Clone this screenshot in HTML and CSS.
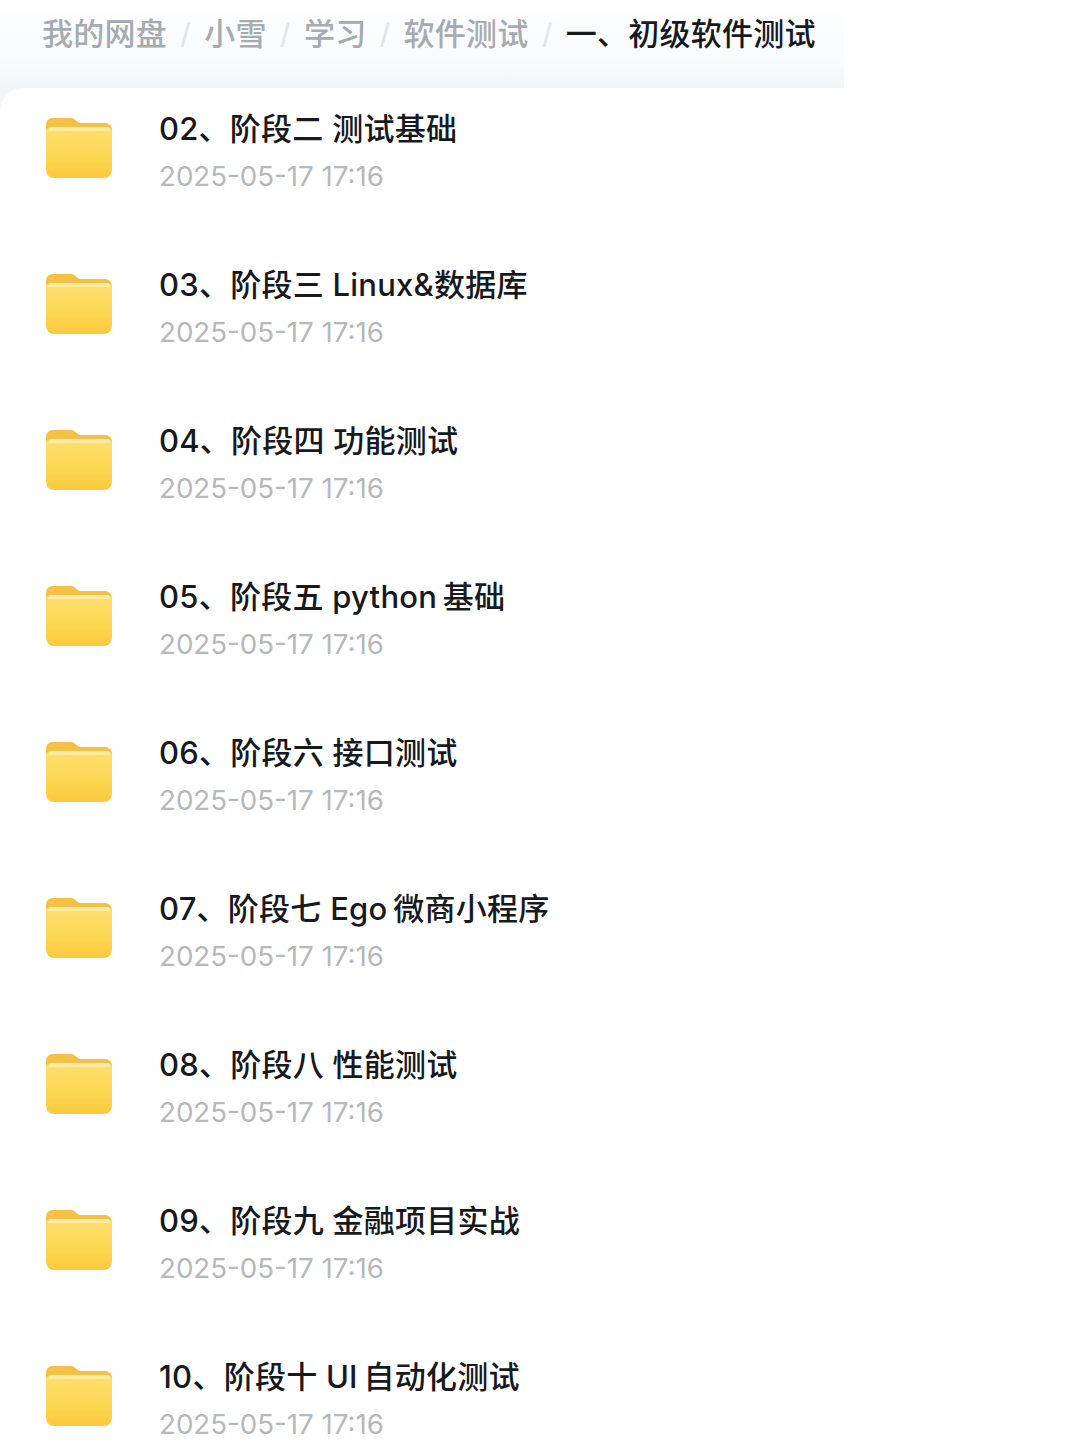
FILE: index.html
```html
<!DOCTYPE html>
<html lang="zh-CN">
<head>
    <meta charset="UTF-8">
    <title>我的网盘</title>
    <link rel="stylesheet" href="styles.css">
</head>
<body>

    <svg class="defs" width="0" height="0">
        <defs>
            <linearGradient id="folder-front" x1="0" y1="0" x2="0" y2="1">
                <stop offset="0" stop-color="#fde070"/>
                <stop offset="0.55" stop-color="#fdd752"/>
                <stop offset="1" stop-color="#fbc93e"/>
            </linearGradient>
            <symbol id="folder" viewBox="0 0 66 60">
                <path d="M0 7C0 3 3 0 7 0H25C29 0 31 5 35 5H59C63 5 66 8 66 12V30H0Z" fill="#f4c144"/>
                <path d="M0 13C0 11 2 9 4 9H62C64 9 66 11 66 13V51C66 56 63 60 58 60H8C3 60 0 56 0 51Z" fill="url(#folder-front)"/>
                <path d="M6 9H60C62 9 63 10 64 13H2C3 10 4 9 6 9Z" fill="#feeaa2"/>
            </symbol>
        </defs>
    </svg>

    <div class="crumbs">
        <span class="crumb">我的网盘</span><span class="sep">/</span>
        <span class="crumb">小雪</span><span class="sep">/</span>
        <span class="crumb">学习</span><span class="sep">/</span>
        <span class="crumb">软件测试</span><span class="sep">/</span>
        <span class="crumb current">一、初级软件测试</span>
    </div>

    <div class="list">
        <div class="row">
            <svg class="icon"><use href="#folder"/></svg>
            <div class="info"><div class="name">02、阶段二 测试基础</div><div class="date">2025-05-17 17:16</div></div>
        </div>
        <div class="row">
            <svg class="icon"><use href="#folder"/></svg>
            <div class="info"><div class="name">03、阶段三 Linux&amp;数据库</div><div class="date">2025-05-17 17:16</div></div>
        </div>
        <div class="row">
            <svg class="icon"><use href="#folder"/></svg>
            <div class="info"><div class="name">04、阶段四 功能测试</div><div class="date">2025-05-17 17:16</div></div>
        </div>
        <div class="row">
            <svg class="icon"><use href="#folder"/></svg>
            <div class="info"><div class="name">05、阶段五 python&thinsp;基础</div><div class="date">2025-05-17 17:16</div></div>
        </div>
        <div class="row">
            <svg class="icon"><use href="#folder"/></svg>
            <div class="info"><div class="name">06、阶段六 接口测试</div><div class="date">2025-05-17 17:16</div></div>
        </div>
        <div class="row">
            <svg class="icon"><use href="#folder"/></svg>
            <div class="info"><div class="name">07、阶段七 Ego&thinsp;微商小程序</div><div class="date">2025-05-17 17:16</div></div>
        </div>
        <div class="row">
            <svg class="icon"><use href="#folder"/></svg>
            <div class="info"><div class="name">08、阶段八 性能测试</div><div class="date">2025-05-17 17:16</div></div>
        </div>
        <div class="row">
            <svg class="icon"><use href="#folder"/></svg>
            <div class="info"><div class="name">09、阶段九 金融项目实战</div><div class="date">2025-05-17 17:16</div></div>
        </div>
        <div class="row">
            <svg class="icon"><use href="#folder"/></svg>
            <div class="info"><div class="name">10、阶段十 UI&thinsp;自动化测试</div><div class="date">2025-05-17 17:16</div></div>
        </div>
    </div>

</body>
</html>
```

FILE: styles.css
```css
html, body {
    margin: 0;
    padding: 0;
    height: 1443px;
    overflow: hidden;
    background-color: #ffffff;
    font-family: "Inter", "Noto Sans CJK SC", sans-serif;
}
.defs {
    position: absolute;
}
.crumbs {
    width: 844px;
    height: 112px;
    box-sizing: border-box;
    padding: 12px 0 0 42px;
    display: flex;
    align-items: flex-start;
    font-size: 31px;
    line-height: 44px;
    font-weight: 500;
    letter-spacing: 0.25px;
    white-space: nowrap;
    background: linear-gradient(#ffffff 0, #fbfcfe 30px, #f9fbfd 60px, #f4f5f7 88px, #f4f5f7 112px);
}
.crumb {
    color: #a6abaf;
}
.current {
    color: #17191c;
}
.sep {
    color: #e2e5e8;
    margin: 0 13.3px;
    font-size: 28px;
}
.list {
    margin-top: -24px;
    background: #ffffff;
    border-top-left-radius: 24px;
    padding-top: 2px;
}
.row {
    height: 156px;
    display: flex;
    align-items: flex-start;
}
.icon {
    width: 66px;
    height: 60px;
    margin: 28px 47px 0 46px;
    flex-shrink: 0;
    filter: blur(0.6px);
}
.name {
    margin-top: 17px;
    font-size: 31px;
    line-height: 44px;
    font-weight: 500;
    letter-spacing: 0.25px;
    color: #17191c;
    white-space: nowrap;
}
.date {
    margin-top: 6px;
    font-size: 27.7px;
    line-height: 38px;
    color: #b6b8bc;
    white-space: nowrap;
}
```
